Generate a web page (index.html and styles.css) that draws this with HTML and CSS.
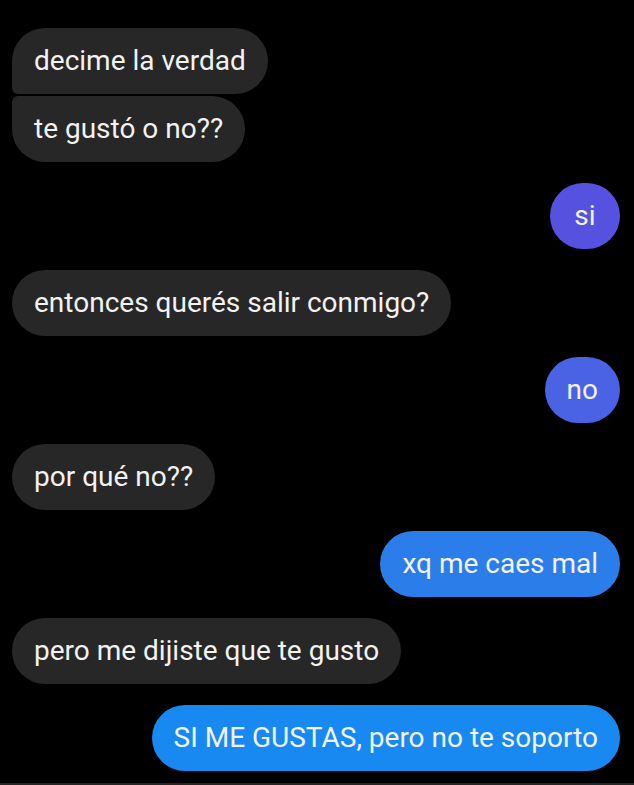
FILE: index.html
```html
<!DOCTYPE html>
<html lang="es">
<head>
<meta charset="utf-8">
<title>Chat</title>
<link rel="stylesheet" href="styles.css">
</head>
<body>
<div class="chat">
  <div class="group in">
    <div class="bubble first">decime la verdad</div>
    <div class="bubble last">te gustó o no??</div>
  </div>
  <div class="row out"><div class="bubble c1">si</div></div>
  <div class="row in"><div class="bubble">entonces querés salir conmigo?</div></div>
  <div class="row out"><div class="bubble c2">no</div></div>
  <div class="row in"><div class="bubble">por qué no??</div></div>
  <div class="row out"><div class="bubble c3">xq me caes mal</div></div>
  <div class="row in"><div class="bubble">pero me dijiste que te gusto</div></div>
  <div class="row out"><div class="bubble c4">SI ME GUSTAS, pero no te soporto</div></div>
</div>
<div class="composer"></div>
</body>
</html>
```
FILE: styles.css
```css
html, body {
  margin: 0;
  padding: 0;
  background: #000;
  height: 785px;
  overflow: hidden;
}
body {
  font-family: Roboto, "Liberation Sans", sans-serif;
  color: #f2f2f2;
}
.chat {
  padding: 28px 14px 0 12px;
  display: flex;
  flex-direction: column;
  gap: 21px;
}
.group {
  display: flex;
  flex-direction: column;
  align-items: flex-start;
  gap: 2px;
}
.row {
  display: flex;
}
.row.in { justify-content: flex-start; }
.row.out { justify-content: flex-end; }
.bubble {
  box-sizing: border-box;
  height: 66px;
  line-height: 66px;
  padding: 0 22px;
  border-radius: 33px;
  background: #272727;
  font-size: 28px;
  white-space: nowrap;
  text-align: center;
}
.bubble.first { border-bottom-left-radius: 6px; }
.bubble.last { border-top-left-radius: 6px; }
.c1 { background: #5651de; min-width: 70px; }
.c2 { background: #4a63e4; }
.c3 { background: #2b7de9; }
.c4 { background: #1989f2; }
.composer {
  margin-top: 12px;
  height: 4px;
  background: #262626;
}
```
